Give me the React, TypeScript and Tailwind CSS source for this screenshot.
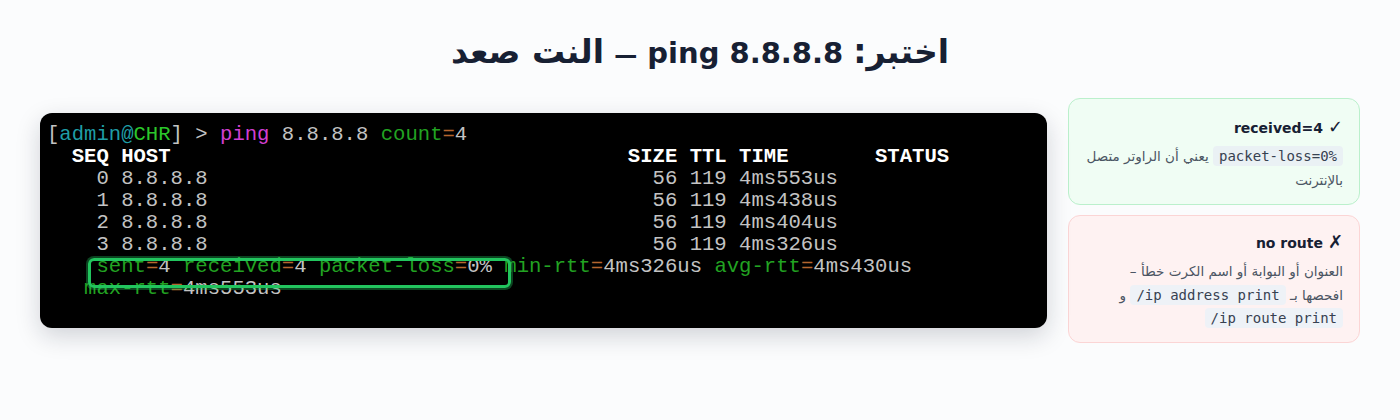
import React from "react";

type Seg = [string, string?, boolean?];

const G = "#c3c3c3";
const GREEN = "#22a322";
const EQ = "#b5652e";

const pad = (s: string, n: number) => s + " ".repeat(Math.max(0, n - s.length));

const row = (seq: string, t: string): Seg[] => [[pad("    " + seq + " 8.8.8.8", 49) + "56 119 " + t, G]];

const lines: Seg[][] = [
  [
    ["[", G],
    ["admin", "#1f9ea6"],
    ["@", "#1f9ea6"],
    ["CHR", "#2bc82b"],
    ["] > ", G],
    ["ping", "#d23fd2"],
    [" 8.8.8.8 ", G],
    ["count", GREEN],
    ["=", EQ],
    ["4", G],
  ],
  [[pad("  SEQ HOST", 47) + "SIZE TTL TIME       STATUS", "#ffffff", true]],
  row("0", "4ms553us"),
  row("1", "4ms438us"),
  row("2", "4ms404us"),
  row("3", "4ms326us"),
  [
    ["    ", G],
    ["sent", GREEN],
    ["=", EQ],
    ["4 ", G],
    ["received", GREEN],
    ["=", EQ],
    ["4 ", G],
    ["packet-loss", GREEN],
    ["=", EQ],
    ["0% ", G],
    ["min-rtt", GREEN],
    ["=", EQ],
    ["4ms326us ", G],
    ["avg-rtt", GREEN],
    ["=", EQ],
    ["4ms430us", G],
  ],
  [
    ["   ", G],
    ["max-rtt", GREEN],
    ["=", EQ],
    ["4ms553us", G],
  ],
];

const mono = { fontFamily: '"DejaVu Sans Mono", monospace' };

export default function App() {
  return (
    <div
      dir="rtl"
      className="min-h-[420px] w-[1400px] bg-[#fbfcfd] px-10 pt-[28px]"
      style={{ fontFamily: '"DejaVu Sans", sans-serif' }}
    >
      <h1 className="flex h-[50px] items-center justify-center text-[29px] font-bold leading-[50px] text-[#172033]">
        <span className="whitespace-pre">
          <span className="text-[33px]">اختبر:</span> ping 8.8.8.8 <span className="text-[23px]">—</span>{" "}
          <span className="text-[33px]">النت صعد</span>
        </span>
      </h1>
      <div className="mt-5 flex items-center gap-[21px]">
        <div className="flex w-[292px] shrink-0 flex-col gap-[10px]">
          <div className="rounded-[12px] border border-[#bbf0cc] bg-[#f0fdf4] px-4 pb-[12px] pt-[16px]">
            <div className="text-[14px] font-bold leading-[26px] text-[#172033]">
              <span className="text-[18px] leading-none">✓</span> received=4
            </div>
            <p className="mt-[3px] text-[13.5px] leading-[24px] text-[#4b5563]">
              <code
                dir="ltr"
                className="whitespace-nowrap rounded bg-[#eaf1f4] px-[6px] py-[2px] text-[14px] text-[#374151]"
                style={mono}
              >
                packet-loss=0%
              </code>{" "}
              يعني أن الراوتر متصل بالإنترنت
            </p>
          </div>
          <div className="rounded-[12px] border border-[#fbd5d5] bg-[#fef2f2] px-4 pb-[11px] pt-[14px]">
            <div className="text-[14px] font-bold leading-[26px] text-[#172033]">
              <span className="text-[18px] leading-none">✗</span> no route
            </div>
            <p className="mt-[4px] text-[13.5px] leading-[23.5px] text-[#4b5563]">
              العنوان أو البوابة أو اسم الكرت خطأ – افحصها بـ{" "}
              <code
                dir="ltr"
                className="whitespace-nowrap rounded bg-[#eef2f7] px-[6px] py-[2px] text-[14px] text-[#374151]"
                style={mono}
              >
                /ip address print
              </code>{" "}
              و{" "}
              <code
                dir="ltr"
                className="whitespace-nowrap rounded bg-[#eef2f7] px-[6px] py-[2px] text-[14px] text-[#374151]"
                style={mono}
              >
                /ip route print
              </code>
            </p>
          </div>
        </div>
        <div
          dir="ltr"
          className="relative h-[215px] flex-1 overflow-hidden rounded-[12px] bg-black pl-[7px] pt-[11px] shadow-[0_8px_24px_rgba(15,23,42,0.18)]"
        >
          <pre
            className="text-[20.6px] leading-[22px]"
            style={{ fontFamily: '"Liberation Mono", monospace' }}
          >
            {lines.map((l, i) => (
              <div key={i} className="h-[22px] whitespace-pre">
                {l.map((s, j) => (
                  <span key={j} style={{ color: s[1] }} className={s[2] ? "font-bold" : ""}>
                    {s[0]}
                  </span>
                ))}
              </div>
            ))}
          </pre>
          <div className="absolute left-[48px] top-[145px] h-[30px] w-[423px] rounded-[6px] border-[3px] border-[#22c55e] shadow-[0_0_0_2px_rgba(34,197,94,0.35)]" />
        </div>
      </div>
    </div>
  );
}
